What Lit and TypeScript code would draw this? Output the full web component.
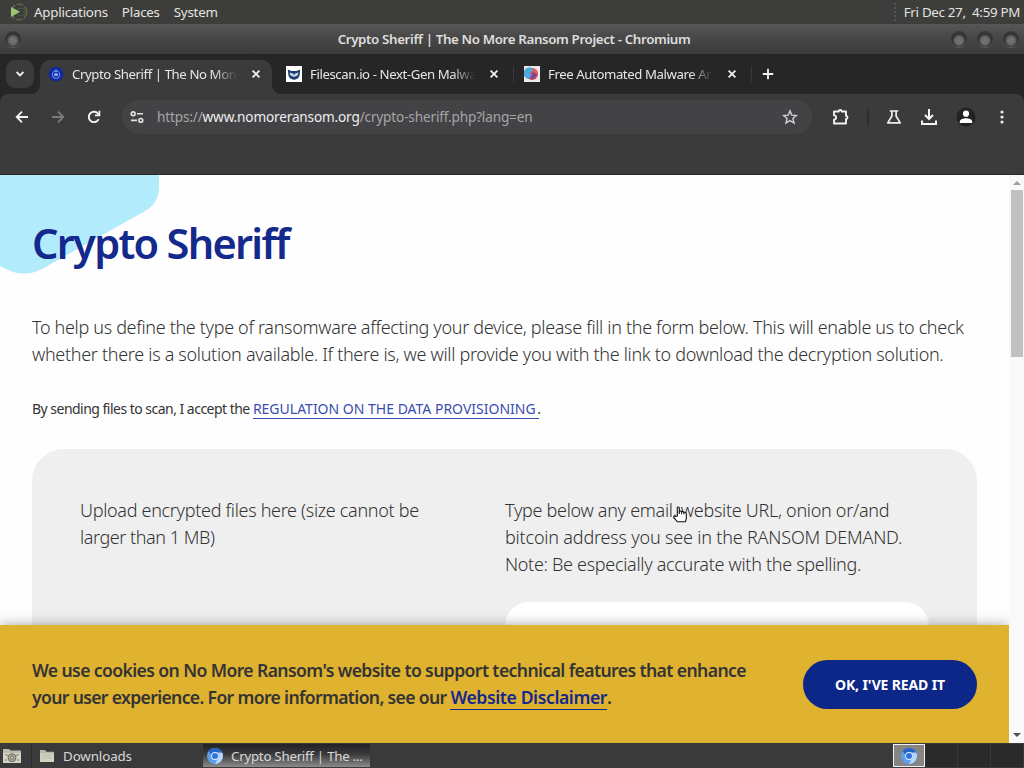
import { LitElement, html, css, svg, nothing, TemplateResult } from 'lit';
import { customElement, property } from 'lit/decorators.js';
import { classMap } from 'lit/directives/class-map.js';

interface Tab {
  title: string;
  icon: TemplateResult;
  active?: boolean;
}

/** A line of copy together with the tracking it is set with, in pixels. */
type Line = [text: string | TemplateResult, tracking: number];

const line = ([text, tracking]: Line) =>
  html`<span class="line" style="letter-spacing:${tracking}px">${text}</span>`;

const chromium = svg`
  <circle cx="8" cy="8" r="8" fill="#5e9df0" />
  <path d="M8 0a8 8 0 0 1 7.2 4.5H8A3.6 3.6 0 0 0 4.6 7L1.6 3.2A8 8 0 0 1 8 0Z" fill="#2565c4" />
  <path d="M15.3 4.7A8 8 0 0 1 8 16l3.4-6.2a3.7 3.7 0 0 0-.8-5.1Z" fill="#b5d5fa" />
  <circle cx="8" cy="8" r="3.9" fill="#e4effd" />
  <circle cx="8" cy="8" r="3" fill="#2f74d8" />
`;

const icons = {
  sheriff: html`<svg viewBox="0 0 16 16" width="16" height="16">
    <circle cx="8" cy="8" r="7.3" fill="#10269c" />
    <circle cx="8" cy="8.6" r="3.7" fill="none" stroke="#5c86ee" stroke-width="1.2" />
    <path d="M8 3.2v3M6.6 9.6V7.8h2.8v1.8Z" fill="#8eb0ff" stroke="#8eb0ff" />
  </svg>`,
  filescan: html`<svg viewBox="0 0 16 16" width="16" height="16">
    <path d="M0 0h16v16H0Z" fill="#fff" />
    <path d="m1.8 3.4 3.6 1.7h5.2l3.6-1.7-.5 5.2A5.7 5.3 0 0 1 8 13.7a5.7 5.3 0 0 1-5.7-5.1Z" fill="#203f70" />
    <path d="m3.5 6.4 3.4 1.2L8 9l1.1-1.4 3.4-1.2-1 3.1L8 11.2 4.5 9.5Z" fill="#c5d8ed" />
    <path d="m6 10.2 2 .9 2-.9-2 2.3Z" fill="#203f70" />
  </svg>`,
  hybrid: html`<svg viewBox="0 0 16 16" width="16" height="16">
    <path d="M0 0h16v16H0Z" fill="#eee9e7" />
    <circle cx="8" cy="8" r="6" fill="#d34558" />
    <path d="M8.5 2A6 6 0 1 0 5 13.2L7.5 9 6 7l3-2Z" fill="#4ca9db" />
    <path d="M6 12.5 11 5l1.5 4-3 3.6Z" fill="#6949a6" />
    <path d="M10 2.4A6 6 0 0 1 13.9 7L11 7.4 9.3 5Z" fill="#f25b51" />
  </svg>`,
  chromium: html`<svg viewBox="0 0 16 16" width="16" height="16">${chromium}</svg>`,
  folder: html`<svg viewBox="0 0 16 14" width="16" height="14">
    <path d="M1 1h5l1.5 1.7H15V13H1Z" fill="#b9bba7" />
    <path d="M1 4.6h14V13H1Z" fill="#d2d3c1" />
    <path d="M2.8 6.6h10.4M2.8 9h10.4" stroke="#b9bba7" />
  </svg>`,
  camera: html`<svg viewBox="0 0 20 16" width="20" height="16">
    <path d="M1 1h6l1.5 1.5H19V15H1Z" fill="#bbbca9" />
    <path d="M1 5h18v10H1Z" fill="#d5d5c6" />
    <circle cx="10" cy="9.7" r="4" fill="#aaa99b" stroke="#6d6c63" />
    <circle cx="10" cy="9.7" r="1.5" fill="#ddddd0" stroke="#6d6c63" />
    <path d="M3 7h3M14 7h3M3 12h2M15 12h2" stroke="#7d7c70" />
  </svg>`,
  menu: html`<svg viewBox="0 0 20 20" width="20" height="20">
    <circle cx="11" cy="10" r="7.8" fill="none" stroke="#5a6b45" stroke-width="1.4" stroke-dasharray="7 1.5" />
    <circle cx="13" cy="10" r="4" fill="none" stroke="#4b583a" />
    <path d="m3 5 9 4.8L3 15Z" fill="#9fc377" />
  </svg>`,
  chevron: html`<svg viewBox="0 0 10 10" width="10" height="10">
    <path d="m1.6 3 3.4 3.5L8.4 3" fill="none" stroke="#eee" stroke-width="1.8" />
  </svg>`,
  close: html`<svg viewBox="0 0 10 10" width="10" height="10">
    <path d="m1.6 1.6 6.8 6.8m0-6.8L1.6 8.4" stroke="#efefef" stroke-width="1.8" />
  </svg>`,
  plus: html`<svg viewBox="0 0 12 12" width="12" height="12">
    <path d="M6 .8v10.4M.8 6h10.4" stroke="#f2f2f2" stroke-width="1.8" />
  </svg>`,
  back: html`<svg viewBox="0 0 16 16" width="16" height="16">
    <path d="M14 8H3m5-5.3L2.7 8 8 13.3" fill="none" stroke="#f2f2f2" stroke-width="1.8" />
  </svg>`,
  forward: html`<svg viewBox="0 0 16 16" width="16" height="16">
    <path d="M2 8h11M8 2.7 13.3 8 8 13.3" fill="none" stroke="#7b7b7b" stroke-width="1.8" />
  </svg>`,
  reload: html`<svg viewBox="0 0 16 16" width="16" height="16">
    <path d="M12.7 10.2A5.2 5.2 0 1 1 12.3 5L13.2 6" fill="none" stroke="#f2f2f2" stroke-width="1.9" />
    <path d="M14.3 1.7v5.5H8.8V5.5h3.7V1.7Z" fill="#f2f2f2" />
  </svg>`,
  tune: html`<svg viewBox="0 0 16 16" width="16" height="16" fill="none" stroke="#e4e4e4" stroke-width="1.6">
    <circle cx="4.2" cy="4.8" r="1.9" />
    <circle cx="11.8" cy="11.4" r="1.9" />
    <path d="M8 4.8h6M2 11.4h6" />
  </svg>`,
  star: html`<svg viewBox="0 0 16 16" width="16" height="16">
    <path
      d="m8 1.9 1.8 4.2 4.6.4-3.5 3 1.1 4.5L8 11.6 4 14l1.1-4.5-3.5-3 4.6-.4Z"
      fill="none"
      stroke="#cfcfd2"
      stroke-width="1.4"
    />
  </svg>`,
  puzzle: html`<svg viewBox="0 0 18 18" width="18" height="18">
    <path
      d="M2 3.5h4.7a1.5 1.5 0 0 1 3 0H14v4.4a1.5 1.5 0 0 1 0 3V15.5H2v-3.9a2.1 2.1 0 0 0 0-4.2Z"
      fill="none"
      stroke="#f0f0f0"
      stroke-width="1.9"
      stroke-linejoin="round"
    />
  </svg>`,
  flask: html`<svg viewBox="0 0 16 16" width="16" height="16">
    <path
      d="M3.8 2h8.4M5.9 2v5L1.8 13.9h12.4L10.1 7V2"
      fill="none"
      stroke="#eee"
      stroke-width="1.7"
      stroke-linejoin="round"
    />
  </svg>`,
  download: html`<svg viewBox="0 0 18 18" width="18" height="18">
    <path d="M9 1v10M5 7l4 4 4-4M2 12.5V16h14v-3.5" fill="none" stroke="#f5f5f5" stroke-width="2" />
  </svg>`,
  profile: html`<svg class="profile" viewBox="0 0 22 22" width="22" height="22">
    <circle cx="11" cy="11" r="9.5" fill="#222" />
    <circle cx="11" cy="7.7" r="3.1" fill="#fff" />
    <path d="M4.8 17v-1.6c0-2 4-3.1 6.2-3.1s6.2 1.1 6.2 3.1V17Z" fill="#fff" />
  </svg>`,
  more: html`<svg viewBox="0 0 4 16" width="4" height="16" fill="#eee">
    <circle cx="2" cy="3" r="1.6" />
    <circle cx="2" cy="8" r="1.6" />
    <circle cx="2" cy="13" r="1.6" />
  </svg>`,
  pointer: html`<svg viewBox="0 0 16 17" width="16" height="17">
    <path
      d="M4.3 10V2.1c0-1.5 2-1.5 2 0v3.5c.5-.8 2-.7 2.3.3.7-.6 2-.4 2.3.6.9-.5 2.4-.1 2.4 1.2v4.5l-.8 3.6H4.3L1 11.7c-.8-1.2.6-2.3 1.6-1.3Z"
      fill="#fff"
      stroke="#111"
      stroke-width="1.1"
    />
    <path d="M6.3 5.6V8m2.3-2v2.2m2.3-1.5v1.6" stroke="#111" />
  </svg>`,
};

/** Desktop panel along the top edge of the screen. */
@customElement('desktop-panel')
export class DesktopPanel extends LitElement {
  static styles = css`
    :host {
      display: flex;
      align-items: center;
      height: 24px;
      padding: 0 4px 0 8px;
      background: #3d3d3b;
      color: #e3e3e0;
      font-size: 13.33px;
      letter-spacing: -0.23px;
      white-space: pre;
    }

    .menu {
      margin-right: 14px;
    }

    svg {
      margin-right: 6px;
    }

    .clock {
      margin-left: auto;
      padding-left: 8px;
      border-left: 2px dotted #555;
      line-height: 18px;
      letter-spacing: -0.3px;
    }
  `;

  render() {
    return html`
      ${icons.menu} ${['Applications', 'Places', 'System'].map((m) => html`<span class="menu">${m}</span>`)}
      <span class="clock">Fri Dec 27,  4:59 PM</span>
    `;
  }
}

/** Tab strip and toolbar. */
@customElement('browser-chrome')
export class BrowserChrome extends LitElement {
  static styles = css`
    :host {
      display: flex;
      flex-direction: column;
      height: 151px;
      box-sizing: border-box;
      background: #262626;
      border-bottom: 1px solid #262626;
      color: #e6e6e6;
      font-size: 13.2px;
    }

    svg {
      display: block;
      flex: none;
    }

    .titlebar {
      display: flex;
      align-items: center;
      justify-content: space-between;
      height: 30px;
      padding: 0 5px;
      background: linear-gradient(#575755, #494949 40%, #3b3b3b);
      font-size: 13.33px;
      font-weight: 600;
      letter-spacing: -0.37px;
      color: #dededc;
    }

    .name {
      padding-left: 4px;
    }

    .buttons {
      display: flex;
      gap: 10px;
      width: 68px;
    }

    .knob {
      width: 16px;
      height: 16px;
      border-radius: 50%;
      background: radial-gradient(circle at 50% 60%, #707070 0 3px, #555 5px, #2b2b2b 7px, #3a3a3a 8px);
      box-shadow: 0 1px 0 #5c5c5c;
    }

    .tabs {
      display: flex;
      align-items: center;
      height: 40px;
      padding-left: 6px;
    }

    .search {
      display: grid;
      place-items: center;
      width: 28px;
      height: 28px;
      margin-right: 6px;
      border-radius: 9px;
      background: #3b3b3b;
    }

    .tab {
      display: flex;
      align-items: center;
      width: 238px;
      height: 16px;
      box-sizing: border-box;
      padding: 0 14px 0 10px;
      border-right: 1px solid #383838;
    }

    .tab.active {
      position: relative;
      width: 232px;
      height: 34px;
      align-self: flex-end;
      margin-right: 4px;
      padding: 0 11px 6px 8px;
      border: 0;
      border-radius: 10px 10px 0 0;
      background: #3b3b3b;
    }

    /* Flares that join the active tab to the toolbar. */
    .tab.active::before,
    .tab.active::after {
      content: '';
      position: absolute;
      bottom: 0;
      width: 8px;
      height: 8px;
    }

    .tab.active::before {
      right: 100%;
      background: radial-gradient(circle at 0 0, transparent 7.5px, #3b3b3b 8px);
    }

    .tab.active::after {
      left: 100%;
      background: radial-gradient(circle at 100% 0, transparent 7.5px, #3b3b3b 8px);
    }

    .title {
      flex: 1;
      margin: 0 14px 0 8px;
      overflow: hidden;
      white-space: nowrap;
      letter-spacing: -0.41px;
      line-height: 20px;
      mask-image: linear-gradient(90deg, #000 86%, transparent);
    }

    .new {
      margin-left: 10px;
    }

    .toolbar {
      display: flex;
      align-items: center;
      height: 46px;
      padding: 0 20px 34px 14px;
      gap: 20px;
      border-radius: 8px 8px 0 0;
      background: #3b3b3b;
    }

    .address {
      display: flex;
      align-items: center;
      flex: none;
      width: 690px;
      height: 34px;
      box-sizing: border-box;
      padding: 0 14px 0 7px;
      border-radius: 17px;
      background: #434346;
      color: #a5a5a7;
      font-size: 13.6px;
      letter-spacing: -0.16px;
    }

    .address b {
      font-weight: 400;
      color: #eeeeee;
    }

    .url {
      flex: 1;
      margin: -2px 0 0 12px;
    }

    .actions {
      display: flex;
      flex: 1;
      align-items: center;
      justify-content: space-between;
    }

    .profile {
      margin-right: 6px;
    }

    .rule {
      width: 2px;
      height: 16px;
      background: #2d2d2d;
    }
  `;

  @property({ attribute: false })
  tabs: Tab[] = [];

  render() {
    return html`
      <div class="titlebar">
        <div class="buttons"><i class="knob"></i></div>
        <span class="name">Crypto Sheriff | The No More Ransom Project - Chromium</span>
        <div class="buttons"><i class="knob"></i><i class="knob"></i><i class="knob"></i></div>
      </div>
      <div class="tabs">
        <div class="search">${icons.chevron}</div>
        ${this.tabs.map(
          (tab) => html`
            <div class=${classMap({ tab: true, active: !!tab.active })}>
              ${tab.icon}<span class="title">${tab.title}</span>${icons.close}
            </div>
          `
        )}
        <div class="new">${icons.plus}</div>
      </div>
      <div class="toolbar">
        ${icons.back} ${icons.forward} ${icons.reload}
        <div class="address">
          ${icons.tune}
          <span class="url">https://<b>www.nomoreransom.org</b>/crypto-sheriff.php?lang=en</span>
          ${icons.star}
        </div>
        <div class="actions">
          ${icons.puzzle}<i class="rule"></i>${icons.flask}${icons.download}${icons.profile}${icons.more}
        </div>
      </div>
    `;
  }
}

/** The visible part of the Crypto Sheriff page, with its cookie banner. */
@customElement('sheriff-page')
export class SheriffPage extends LitElement {
  static styles = css`
    :host {
      display: flex;
      height: 568px;
      background: #fefefe;
      color: #333;
      font-family: 'Noto Sans', sans-serif;
      font-weight: 300;
    }

    .view {
      position: relative;
      flex: 1;
      overflow: hidden;
    }

    .blob {
      position: absolute;
      top: 0;
      left: 0;
    }

    .content {
      position: relative;
      padding: 38px 32px 0;
    }

    h1 {
      margin: 0;
      color: #14298c;
      font-size: 41.5px;
      font-weight: 600;
      line-height: 60px;
      letter-spacing: -1.7px;
      white-space: nowrap;
    }

    p {
      margin: 0;
      font-size: 18px;
      line-height: 27px;
    }

    .line {
      display: block;
      white-space: nowrap;
    }

    .intro {
      margin-top: 41px;
    }

    .terms {
      margin-top: 27px;
      font-size: 14px;
      font-weight: 400;
    }

    a {
      color: #3a4db0;
      border-bottom: 1px solid #3a4db0;
    }

    .terms a {
      letter-spacing: 0;
      margin-right: -2px;
    }

    .card {
      display: grid;
      grid-template-columns: 425px 1fr;
      height: 300px;
      box-sizing: border-box;
      margin-top: 27px;
      padding: 48px 48px 0;
      border-radius: 32px 32px 0 0;
      background: #efefef;
    }

    .field {
      height: 80px;
      margin-top: 24px;
      border-radius: 24px;
      background: #fff;
    }

    .cookies {
      position: absolute;
      inset: auto 0 0;
      display: flex;
      align-items: center;
      justify-content: space-between;
      height: 118px;
      box-sizing: border-box;
      padding: 0 32px;
      background: #dfb22f;
      box-shadow: 0 0 12px rgb(0 0 0 / 0.35);
      color: #343434;
    }

    .cookies p {
      font-size: 17.6px;
      font-weight: 600;
    }

    .cookies a {
      color: #14298c;
      border-color: #14298c;
      letter-spacing: -0.4px;
    }

    .accept {
      width: 174px;
      height: 49px;
      border: 0;
      border-radius: 25px;
      background: #0d2788;
      color: #fff;
      font: 700 14px 'Noto Sans', sans-serif;
      letter-spacing: -0.14px;
    }

    .pointer {
      position: absolute;
      top: 331px;
      left: 673px;
    }

    .scrollbar {
      display: flex;
      flex-direction: column;
      align-items: center;
      width: 15px;
      background: #f9f9f9;
    }

    .arrow {
      border: 4px solid transparent;
      border-top: 0;
      border-bottom: 4px solid #a0a0a0;
      margin: 6px 0 5px;
    }

    .arrow.down {
      border-top: 4px solid #505050;
      border-bottom: 0;
      margin: auto 0 6px;
    }

    .thumb {
      width: 12px;
      height: 167px;
      background: #c1c1c1;
    }
  `;

  intro: Line[] = [
    ['To help us define the type of ransomware affecting your device, please fill in the form below. This will enable us to check', -0.33],
    ['whether there is a solution available. If there is, we will provide you with the link to download the decryption solution.', -0.31],
  ];

  terms: Line = [
    html`By sending files to scan, I accept the <a>REGULATION ON THE DATA PROVISIONING </a>.`,
    -0.52,
  ];

  upload: Line[] = [
    ['Upload encrypted files here (size cannot be', -0.31],
    ['larger than 1 MB)', -0.45],
  ];

  demand: Line[] = [
    ['Type below any email, website URL, onion or/and', -0.3],
    ['bitcoin address you see in the RANSOM DEMAND.', -0.19],
    ['Note: Be especially accurate with the spelling.', -0.31],
  ];

  cookies: Line[] = [
    ["We use cookies on No More Ransom's website to support technical features that enhance", -0.61],
    [html`your user experience. For more information, see our <a>Website Disclaimer</a>.`, -0.66],
  ];

  render() {
    return html`
      <div class="view">
        <svg class="blob" width="160" height="100" viewBox="0 0 160 100">
          <path d="M0 0h159v12q0 16-14 24L42 94q-18 9-36 0L0 91Z" fill="#b2ebfc" />
        </svg>
        <div class="content">
          <h1>Crypto Sheriff</h1>
          <p class="intro">${this.intro.map(line)}</p>
          <p class="terms">${line(this.terms)}</p>
          <div class="card">
            <p>${this.upload.map(line)}</p>
            <div>
              <p>${this.demand.map(line)}</p>
              <div class="field"></div>
            </div>
          </div>
        </div>
        <div class="cookies">
          <p>${this.cookies.map(line)}</p>
          <button class="accept">OK, I'VE READ IT</button>
        </div>
        <div class="pointer">${icons.pointer}</div>
      </div>
      <div class="scrollbar">
        <i class="arrow"></i>
        <i class="thumb"></i>
        <i class="arrow down"></i>
      </div>
    `;
  }
}

/** Window list and workspace switcher along the bottom edge. */
@customElement('task-bar')
export class TaskBar extends LitElement {
  static styles = css`
    :host {
      display: flex;
      align-items: center;
      height: 25px;
      background: #3a3a3a;
      color: #d8d8d5;
      font-size: 13.33px;
      letter-spacing: -0.1px;
    }

    svg {
      flex: none;
    }

    .camera {
      display: flex;
      width: 29px;
      padding-left: 2px;
    }

    .window {
      display: flex;
      align-items: center;
      gap: 8px;
      width: 167px;
      height: 23px;
      box-sizing: border-box;
      padding-left: 7px;
      border-left: 1px solid #2c2c2c;
      white-space: nowrap;
    }

    .window.active {
      margin-left: 5px;
      padding-left: 4px;
      letter-spacing: -0.27px;
      border: 0;
      background: linear-gradient(#222226, #3b3b3e 45%, #8b8b8b);
    }

    .spaces {
      display: flex;
      margin-left: auto;
      height: 23px;
    }

    .space {
      display: grid;
      place-items: center;
      width: 33px;
      box-sizing: border-box;
      border-right: 1px solid #383838;
      background: #2a2a2a;
    }

    .space.active {
      width: 32px;
      border: 1px solid #f0f0f0;
      background: #858585;
    }
  `;

  render() {
    return html`
      <div class="camera">${icons.camera}</div>
      <div class="window">${icons.folder}<span>Downloads</span></div>
      <div class="window active">${icons.chromium}<span>Crypto Sheriff | The ...</span></div>
      <div class="spaces">
        ${[true, false, false, false].map(
          (active) => html`<div class=${classMap({ space: true, active })}>${active ? icons.chromium : nothing}</div>`
        )}
      </div>
    `;
  }
}

@customElement('app-root')
export class AppRoot extends LitElement {
  static styles = css`
    :host {
      display: block;
      width: 1024px;
      height: 768px;
      overflow: hidden;
      font-family: 'Noto Sans', sans-serif;
    }
  `;

  tabs: Tab[] = [
    { title: 'Crypto Sheriff | The No More', icon: icons.sheriff, active: true },
    { title: 'Filescan.io - Next-Gen Malwa', icon: icons.filescan },
    { title: 'Free Automated Malware An', icon: icons.hybrid },
  ];

  render() {
    return html`
      <desktop-panel></desktop-panel>
      <browser-chrome .tabs=${this.tabs}></browser-chrome>
      <sheriff-page></sheriff-page>
      <task-bar></task-bar>
    `;
  }
}

declare global {
  interface HTMLElementTagNameMap {
    'app-root': AppRoot;
    'desktop-panel': DesktopPanel;
    'browser-chrome': BrowserChrome;
    'sheriff-page': SheriffPage;
    'task-bar': TaskBar;
  }
}
